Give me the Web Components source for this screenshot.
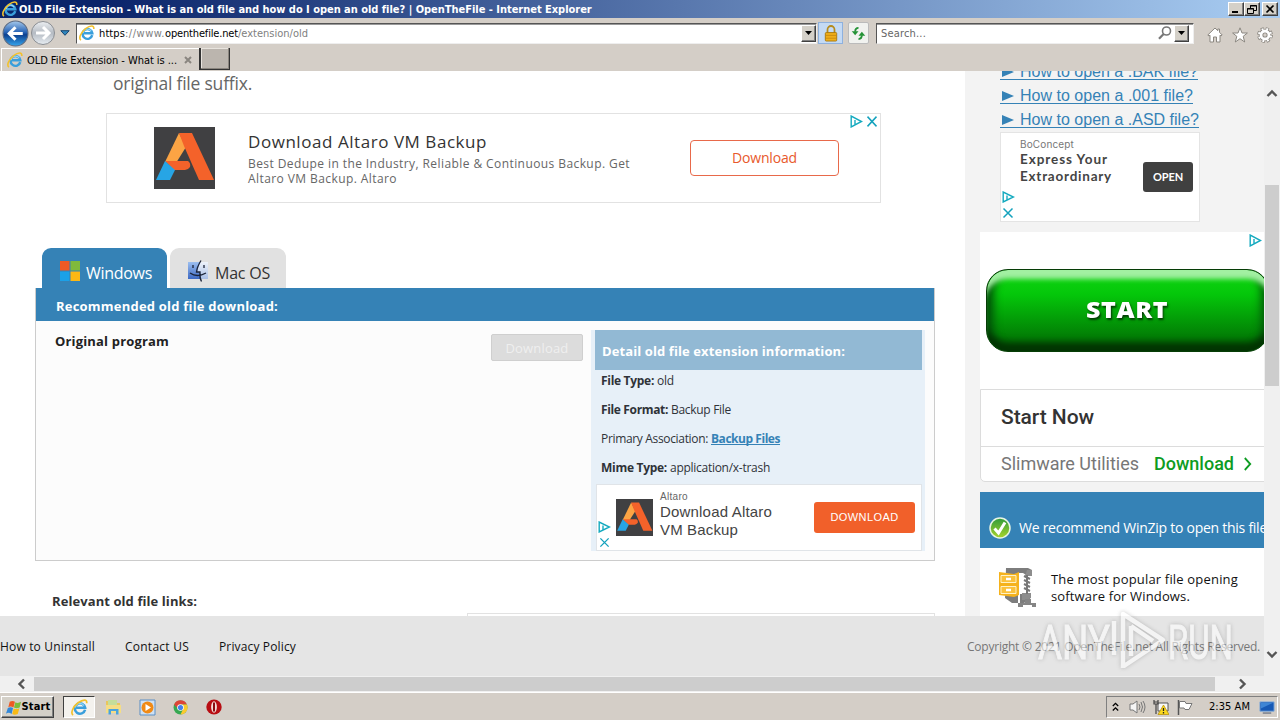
<!DOCTYPE html>
<html lang="en">
<head>
<meta charset="utf-8">
<title>OLD File Extension</title>
<style>
  body {
    margin: 0;
    width: 1280px;
    height: 720px;
    overflow: hidden;
    font-family: "Open Sans", "Noto Sans", sans-serif;
  }
</style>
</head>
<body>
<desktop-screen></desktop-screen>

<script>
const ui = '"DejaVu Sans Condensed", "DejaVu Sans", sans-serif';

const define = (name, html, setup) => {
  const template = document.createElement('template');
  template.innerHTML = html;
  customElements.define(name, class extends HTMLElement {
    constructor() {
      super();
      this.attachShadow({ mode: 'open' });
      this.shadowRoot.appendChild(template.content.cloneNode(true));
    }
    connectedCallback() {
      if (setup) setup(this, this.shadowRoot);
    }
  });
};

// one line of text, spaced out to a given width
define('fit-text', `
  <style>
    :host { display: inline-block; white-space: nowrap; flex: none; }
  </style>
  <span><slot></slot></span>
`, (el, root) => {
  const want = parseFloat(el.getAttribute('w'));
  const len = el.textContent.length;
  const has = root.querySelector('span').getBoundingClientRect().width;
  if (!want || !has || len < 2) return;
  el.style.letterSpacing = (want - has) / len + 'px';
  el.style.width = want + 'px';
});

const icons = {
  ie: ['0 0 18 18', `
    <path d="M14.9 11.4A5.500 5.500 0 1 1 15 9.300H5.500" fill="none" stroke="#3a9fdc" stroke-width="2.700"/>
    <path d="M4.600 9A5 5 0 0 1 13.800 7" fill="none" stroke="#8fd6f7" stroke-width="1.200"/>
    <path d="M2.300 17C-.6 15.500 1.500 8.500 7.500 4C12.500 .4 17.300 -.3 16.600 4.500" fill="none" stroke="#f2c12e" stroke-width="1.800"/>`],
  back: ['0 0 26 26', `
    <defs><linearGradient id="b" x2="0" y2="1"><stop stop-color="#a5c9ec"/><stop offset=".45" stop-color="#2763b5"/><stop offset=".55" stop-color="#0d408f"/><stop offset="1" stop-color="#35a6ee"/></linearGradient></defs>
    <circle cx="13" cy="13" r="12" fill="url(#b)" stroke="#5c6b83"/>
    <path d="M20 13H8M13 7L7 13L13 19" fill="none" stroke="#fff" stroke-width="3"/>`],
  forward: ['0 0 26 26', `
    <defs><linearGradient id="f" x2="0" y2="1"><stop stop-color="#eceff2"/><stop offset=".5" stop-color="#b5bbc3"/><stop offset="1" stop-color="#e7edf2"/></linearGradient></defs>
    <circle cx="13" cy="13" r="11.500" fill="url(#f)" stroke="#8b8e93"/>
    <path d="M6 13H18M13 7L19 13L13 19" fill="none" stroke="#fff" stroke-width="3"/>`],
  drop: ['0 0 10 6', `<path d="M.8 .7H9.200L5 5.300Z" fill="#2f86bd" stroke="#16446e"/>`],
  caret: ['0 0 7 4', `<path d="M0 0H7L3.500 4Z" fill="#000"/>`],
  lock: ['0 0 16 18', `
    <path d="M4 9V5a4 4 0 0 1 8 0V9" fill="none" stroke="#b58b1d" stroke-width="2"/>
    <rect x="1.500" y="8" width="13" height="9" rx="1" fill="#efae19" stroke="#a9780c"/>
    <path d="M2 11H14M2 14H14" stroke="#c98a10"/>`],
  refresh: ['0 0 16 14', `
    <path d="M8 1Q4.500 1 4.500 5M8 13Q11.500 13 11.500 9" fill="none" stroke="#249336" stroke-width="2"/>
    <path d="M.8 4.500H8L4.400 9ZM8 9.500H15.200L11.600 5Z" fill="#249336"/>`],
  search: ['0 0 14 14', `<circle cx="8.500" cy="5" r="4" fill="none" stroke="#777" stroke-width="1.600"/><path d="M5.600 8L1 12.800" stroke="#777" stroke-width="2.200"/>`],
  home: ['0 0 16 16', `<path d="M8 1L.8 8L2 9L3 8.200V15H6.500V10H9.500V15H13V8.200L14 9L15.200 8L12.500 5.300V2H10.800V3.700Z" fill="#fff" stroke="#8b8780"/>`],
  star: ['0 0 16 16', `<path d="M8 .8L10 6H15.400L11.200 9.300L12.700 15L8 11.700L3.300 15L4.800 9.300L.6 6H6Z" fill="#fff" stroke="#8b8780"/>`],
  gear: ['0 0 16 16', `
    <circle cx="8" cy="8" r="6.300" fill="none" stroke="#8b8780" stroke-width="3.200" stroke-dasharray="3 1.948"/>
    <circle cx="8" cy="8" r="4" fill="none" stroke="#8b8780" stroke-width="4.600"/>
    <circle cx="8" cy="8" r="6" fill="none" stroke="#fff" stroke-width="2.200" stroke-dasharray="1.800 2.912" stroke-dashoffset="-.6"/>
    <circle cx="8" cy="8" r="4" fill="none" stroke="#fff" stroke-width="2.800"/>`],
  altaro: ['0 0 61 62', `
    <path d="M0 0H61V62H0Z" fill="#404042"/>
    <path d="M25 6L32 20L22 36L11 35Z" fill="#fba444"/>
    <path d="M25 6H38L60 53H45L30 19Z" fill="#f4622a"/>
    <path d="M11 34H34Q37 36 36 40Q34 43 31 43H20Z" fill="#f4622a"/>
    <path d="M11 34L21 43L16 53H2Z" fill="#27a5e5"/>`],
  adchoices: ['0 0 13 12', `<path d="M1.200 1V11L11.500 6ZM5 4.500V8.500" fill="none" stroke="#14aabf" stroke-width="1.400"/>`],
  cross: ['0 0 12 12', `<path d="M1.500 1.500L10.500 10.500M10.500 1.500L1.500 10.500" stroke="#14a2bd" stroke-width="1.500"/>`],
  windows: ['0 0 20 20', `<path d="M0 0H9.500V9.500H0Z" fill="#ef5a24"/><path d="M10.500 0H20V9.500H10.500Z" fill="#80b93c"/><path d="M0 10.500H9.500V20H0Z" fill="#1ba1e8"/><path d="M10.500 10.500H20V20H10.500Z" fill="#fcb813"/>`],
  finder: ['0 0 22 22', `
    <defs><linearGradient id="m" x2="0" y2="1"><stop stop-color="#9dbff0"/><stop offset="1" stop-color="#3c69c4"/></linearGradient>
    <linearGradient id="n" x2="0" y2="1"><stop stop-color="#eef3fb"/><stop offset="1" stop-color="#a9bfe6"/></linearGradient></defs>
    <path d="M1 2H21V19H1Z" fill="url(#m)"/><path d="M13 2H21V19H14L13 12H10Z" fill="url(#n)"/>
    <path d="M6 5V8M17 5V8M14 .5Q10 7 9.500 12H13Q12.500 18 14.500 21.500M3 13Q10 18 19 13" fill="none" stroke="#1b2338" stroke-width="1.300"/>`],
  check: ['0 0 22 22', `
    <defs><linearGradient id="c" x2="0" y2="1"><stop stop-color="#2f9a3b"/><stop offset="1" stop-color="#a9d52b"/></linearGradient></defs>
    <circle cx="11" cy="11" r="10" fill="url(#c)" stroke="#e8f5e4" stroke-width="1.500"/>
    <path d="M5.500 11.500L9.500 16L16 5.500" fill="none" stroke="#fff" stroke-width="3"/>`],
  chevron: ['0 0 10 14', `<path d="M2 1L8 7L2 13" fill="none" stroke="#0d9c22" stroke-width="2"/>`],
  winzip: ['0 0 40 40', `
    <path d="M8 0H30L34 2V7H28L25 5H20V35H26L32 31V26H22V35H14L7 30Z" fill="#7d7d7d"/>
    <path d="M29 2H34V8H27ZM24 25H33V30L29 32H24Z" fill="#8d8d8d"/>
    <path d="M26 8L32 11M26 12L32 15M26 16L32 19M26 20L32 23M29 7V26" stroke="#777" stroke-width="2"/>
    <path d="M1 4L16 6L21 4V27L16 29L1 27Z" fill="#f5b21c"/>
    <path d="M3 7.500H18V14.500H3ZM3 18.500H18V25.500H3Z" fill="#fbc13a" stroke="#fff1c4"/>
    <path d="M8 11H13M8 22H13" stroke="#fff" stroke-width="2.500"/>
    <path d="M27 31H33V35H38V39H34V37H25V39H20V35H27Z" fill="#858585"/>`],
  flag: ['0 0 18 18', `
    <path d="M5 3Q8 1 10.500 3L9 9Q6 7 3.500 8.700Z" fill="#ed5a24"/><path d="M11 3.500Q13.500 5 17 3L15.500 9Q12 10.500 9.500 9Z" fill="#7bbd3a"/>
    <path d="M3 9.500Q6 8 8.500 9.500L7 16Q4 13.500 1 15.500Z" fill="#3388d8"/><path d="M9.200 10Q12 11.500 15.200 9.800L13.500 16Q10 17.500 7.700 16Z" fill="#f9ba16"/>`],
  folder: ['0 0 17 16', `
    <path d="M1 2H7L8 4H15V14H1Z" fill="#e9c65c"/><path d="M3 1H12V6H3Z" fill="#c5dd9a"/>
    <path d="M1 6H16V14H1Z" fill="#f5dd85"/><path d="M3.500 15.500V10H13.500V15.500H11V12H6V15.500Z" fill="#4aa3dd"/>`],
  player: ['0 0 17 17', `
    <path d="M1 1H16V16H1Z" fill="#cfe1f3" stroke="#5a8fc5"/>
    <circle cx="8.500" cy="8.500" r="6" fill="#f08a16"/><path d="M6.500 5V12L12 8.500Z" fill="#fff"/>`],
  chrome: ['0 0 14 14', `
    <circle cx="7" cy="7" r="6.500" fill="#36a852"/><path d="M1 4.200A6.500 6.500 0 0 1 13 4.200H7L4.500 8Z" fill="#dd4437"/>
    <path d="M13 4.200A6.500 6.500 0 0 1 7 13.500L9.500 8.500L8.500 4.200Z" fill="#fbca2d"/>
    <circle cx="7" cy="7" r="3.100" fill="#fff"/><circle cx="7" cy="7" r="2.400" fill="#4580ea"/>`],
  opera: ['0 0 16 16', `<ellipse cx="8" cy="8" rx="7.700" ry="7.500" fill="#b80d12"/><ellipse cx="8" cy="8" rx="2.900" ry="5.700" fill="#f4ded9"/><path d="M8 3.500V12.500" stroke="#8c0b0f" stroke-width="2"/>`],
  more: ['0 0 7 10', `<path d="M.8 4L3.500 1.300L6.200 4M.8 8.500L3.500 5.800L6.200 8.500" fill="none" stroke="#000" stroke-width="1.300"/>`],
  sound: ['0 0 17 14', `<path d="M1 4H4L8 1V13L4 10H1Z" fill="#f5f5f5" stroke="#777"/><path d="M10 4Q12 7 10 10M12 2Q15 7 12 12M14 1Q18 7 14 13" fill="none" stroke="#777"/>`],
  network: ['0 0 16 16', `
    <path d="M5 4H15V12H5Z" fill="#f7f7f7" stroke="#555"/><path d="M1 1V5H5V1M3 5V15M1 3H5" fill="none" stroke="#444" stroke-width="1.200"/>
    <path d="M10.500 6L16 15.500H5Z" fill="#fbd91d" stroke="#b58b00" stroke-width=".7"/><path d="M10.500 9V12M10.500 13V14.500" stroke="#222" stroke-width="1.300"/>`],
  action: ['0 0 16 15', `<path d="M1.500 0V15" stroke="#555" stroke-width="1.500"/><path d="M2.500 1.500H8L9 3.500H15L12 9.500H8L7 8H2.500Z" fill="#fff" stroke="#777"/>`],
  monitor: ['0 0 17 14', `<path d="M1 1H16V11H1Z" fill="#1759b5" stroke="#7fa9d8"/><path d="M2 2H15L2 8Z" fill="#3e85d5"/><path d="M4 13H13" stroke="#8b8f98" stroke-width="2"/>`],
  up: ['0 0 12 8', `<path d="M1.500 7L6 2.500L10.500 7" fill="none" stroke="#555" stroke-width="2.400"/>`],
  down: ['0 0 12 8', `<path d="M1.500 1L6 5.500L10.500 1" fill="none" stroke="#555" stroke-width="2.400"/>`],
  left: ['0 0 8 12', `<path d="M7 1.500L2.500 6L7 10.500" fill="none" stroke="#555" stroke-width="2.400"/>`],
  right: ['0 0 8 12', `<path d="M1 1.500L5.500 6L1 10.500" fill="none" stroke="#555" stroke-width="2.400"/>`],
};

define('ui-icon', `
  <style>
    :host { display: block; flex: none; }
    svg { display: block; width: 100%; height: 100%; }
  </style>
`, (el, root) => {
  const [box, body] = icons[el.getAttribute('name')];
  el.style.width = el.getAttribute('w') + 'px';
  el.style.height = (el.getAttribute('h') || el.getAttribute('w')) + 'px';
  root.innerHTML += `<svg viewBox="${box}" preserveAspectRatio="none">${body}</svg>`;
});

define('bevel-button', `
  <style>
    :host {
      display: flex; align-items: center; justify-content: center; box-sizing: border-box; flex: none;
      background: #d4d0c8; border: 1px solid; border-color: #fff #404040 #404040 #fff;
      box-shadow: inset -1px -1px #808080;
    }
  </style>
  <slot></slot>
`);

define('title-bar', `
  <style>
    :host {
      display: flex; align-items: center; height: 18px; box-sizing: border-box; padding: 0 2px 0 2px;
      background: linear-gradient(90deg, #0a246a, #0a246a 8%, #a6caf0 98%);
      color: #fff; font: bold 11px/18px ${ui};
    }
    fit-text { margin-left: 1px; padding-top: 1px; }
    .controls { display: flex; margin-left: auto; }
    bevel-button { width: 16px; height: 14px; }
    bevel-button:last-child { margin-left: 2px; }
    svg { width: 12px; height: 10px; }
    path { fill: none; stroke: #000; }
  </style>
  <ui-icon name="ie" w="16"></ui-icon>
  <fit-text w="572">OLD File Extension - What is an old file and how do I open an old file? | OpenTheFile - Internet Explorer</fit-text>
  <div class="controls">
    <bevel-button><svg><path d="M2 8H8" stroke-width="2"/></svg></bevel-button>
    <bevel-button><svg><path d="M4.500 4V1.500H10.500V6.500H8M4 2H11M1.500 4.500H7.500V9.500H1.500ZM1 5H8"/></svg></bevel-button>
    <bevel-button><svg><path d="M2.500 1.500L9.500 8.500M9.500 1.500L2.500 8.500" stroke-width="1.700"/></svg></bevel-button>
  </div>
`);

define('nav-bar', `
  <style>
    :host { display: flex; align-items: center; height: 29px; padding: 1px 7px 0 2px; box-sizing: border-box; font: 11px/18px ${ui}; }
    .field {
      display: flex; align-items: center; box-sizing: border-box; height: 21px; background: #fff;
      border: 1px solid; border-color: #555 #eee #eee #555; box-shadow: inset 0 1px #999;
    }
    .field fit-text { padding-top: 2px; }
    .address { width: 741px; margin-left: 6px; padding-left: 2px; }
    .search { width: 318px; margin-left: 7px; padding: 0 4px 0 4px; color: #666; }
    .url { margin-left: 4px; display: flex; color: #808080; }
    b { font-weight: normal; color: #000; }
    bevel-button { width: 15px; height: 17px; margin-left: auto; }
    .box { width: 23px; height: 20px; display: grid; place-items: center; border: 1px solid #8eb1de; background: #c4daf4; margin-left: 0; }
    .reload { background: #f1f2ef; border-color: #bbb; width: 19px; margin-left: 5px; border-radius: 2px; }
    .tools { display: flex; gap: 9px; margin-left: auto; padding-top: 3px; }
    .search bevel-button { margin-left: 2px; }
  </style>
  <ui-icon name="back" w="27"></ui-icon>
  <ui-icon name="forward" w="26" style="margin-left:1px"></ui-icon>
  <ui-icon name="drop" w="10" h="6" style="margin-left:4px"></ui-icon>
  <div class="field address">
    <ui-icon name="ie" w="16"></ui-icon>
    <div class="url"><b><fit-text w="26">https</fit-text></b><fit-text w="40">://www.</fit-text><b><fit-text w="73">openthefile.net</fit-text></b><fit-text w="70">/extension/old</fit-text></div>
    <bevel-button><ui-icon name="caret" w="7" h="4"></ui-icon></bevel-button>
  </div>
  <div class="box" style="margin-left:1px"><ui-icon name="lock" w="14" h="17"></ui-icon></div>
  <div class="box reload"><ui-icon name="refresh" w="15" h="13"></ui-icon></div>
  <div class="field search">
    <fit-text w="45">Search...</fit-text>
    <ui-icon name="search" w="14" style="margin-left:auto"></ui-icon>
    <bevel-button><ui-icon name="caret" w="7" h="4"></ui-icon></bevel-button>
  </div>
  <div class="tools">
    <ui-icon name="home" w="16"></ui-icon>
    <ui-icon name="star" w="16"></ui-icon>
    <ui-icon name="gear" w="16"></ui-icon>
  </div>
`);

define('tab-strip', `
  <style>
    :host { display: flex; height: 24px; box-sizing: border-box; padding: 1px 0 0 1px; font: 11px/23px ${ui}; }
    .tab { display: flex; align-items: center; width: 198px; box-sizing: border-box; padding-left: 5px; border-top: 1px solid #fff; border-left: 1px solid #fff; }
    .tab fit-text { margin-left: 4px; }
    .close { margin-left: 7px; width: 8px; height: 8px; }
    .close path { stroke: #8a8680; stroke-width: 2; }
    .new { width: 31px; height: 22px; box-sizing: border-box; background: #bbb5ae; border: solid #333; border-width: 0 1px 1px 2px; box-shadow: inset -1px -1px #8a857e, inset 1px 1px #e8e4de; }
  </style>
  <div class="tab">
    <ui-icon name="ie" w="16"></ui-icon>
    <fit-text w="150">OLD File Extension - What is ...</fit-text>
    <svg class="close"><path d="M1 1L7 7M7 1L1 7"/></svg>
  </div>
  <div class="new"></div>
`);

define('wide-ad', `
  <style>
    :host { display: flex; box-sizing: border-box; width: 775px; height: 90px; margin: 0 0 0 106px; border: 1px solid #e2e2e2; padding: 13px 2px 0 47px; }
    .copy { margin: 3px 0 0 33px; width: 442px; letter-spacing: 0; }
    h3 { margin: 0; font: 17px/24px "Open Sans", sans-serif; color: #333; }
    p { margin: 2px 0 0; font-size: 12px; line-height: 15px; color: #666; }
    .copy fit-text { display: block; }
    .button { box-sizing: border-box; width: 149px; height: 36px; margin-top: 13px; border: 1px solid #e8694a; border-radius: 4px; text-align: center; font-size: 14px; line-height: 34px; color: #e8592c; }
    .marks { display: flex; gap: 3px; margin: -12px 0 0 auto; }
  </style>
  <ui-icon name="altaro" w="61" h="62"></ui-icon>
  <div class="copy">
    <h3><fit-text w="239">Download Altaro VM Backup</fit-text></h3>
    <p><fit-text w="382">Best Dedupe in the Industry, Reliable &amp; Continuous Backup. Get</fit-text><fit-text w="149">Altaro VM Backup. Altaro</fit-text></p>
  </div>
  <div class="button"><fit-text w="65">Download</fit-text></div>
  <div class="marks"><ui-icon name="adchoices" w="13" h="13"></ui-icon><ui-icon name="cross" w="12" h="13"></ui-icon></div>
`);

define('os-tab', `
  <style>
    :host {
      display: flex; align-items: center; box-sizing: border-box; height: 40px; padding: 6px 0 0 17px;
      border-radius: 9px 9px 0 0; background: #e1e1e1; color: #333; font-size: 16px; line-height: 34px;
    }
    :host([active]) { background: #3582b6; color: #fff; padding-left: 18px; }
    ::slotted(fit-text) { margin-left: 6px; margin-top: 3px; }
  </style>
  <slot></slot>
`);

define('detail-card', `
  <style>
    :host { display: block; box-sizing: border-box; width: 334px; height: 221px; padding: 0 3px 0 4px; background: #e7f0f8; font-size: 12px; color: #2f3338; }
    h4 { margin: 0; height: 40px; padding: 2px 0 0 7px; box-sizing: border-box; font: bold 13px/39px "Open Sans", sans-serif; color: #fff; background: #92b9d4; }
    .row { display: flex; gap: 3px; height: 29px; line-height: 22px; padding-left: 6px; }
    a { color: #3582b6; font-weight: bold; }
    a fit-text { height: 16px; line-height: 22px; border-bottom: 1px solid #3582b6; }
    .ad { display: flex; box-sizing: border-box; height: 67px; margin: -2px 0 0 1px; border: 1px solid #e0e4e8; background: #fff; font-family: "Liberation Sans", sans-serif; color: #444; }
    .marks { padding: 36px 0 0 1px; width: 18px; display: flex; flex-direction: column; gap: 4px; }
    .copy { margin-left: 7px; padding-top: 6px; width: 154px; font-size: 15px; line-height: 18px; }
    small { display: block; font-size: 10px; line-height: 12px; color: #666; }
    .copy fit-text { display: block; }
    .button { width: 101px; height: 31px; margin-top: 17px; border-radius: 3px; background: #f1602a; color: #fff; text-align: center; font: 11px/31px "Liberation Sans", sans-serif; }
  </style>
  <h4><fit-text w="243">Detail old file extension information:</fit-text></h4>
  <div class="row"><b><fit-text w="53">File Type:</fit-text></b><fit-text w="17">old</fit-text></div>
  <div class="row"><b><fit-text w="67">File Format:</fit-text></b><fit-text w="60">Backup File</fit-text></div>
  <div class="row"><fit-text w="107">Primary Association:</fit-text><a><fit-text w="69">Backup Files</fit-text></a></div>
  <div class="row"><b><fit-text w="66">Mime Type:</fit-text></b><fit-text w="100">application/x-trash</fit-text></div>
  <div class="ad">
    <div class="marks"><ui-icon name="adchoices" w="13" h="12"></ui-icon><ui-icon name="cross" w="11" style="margin-left:1px"></ui-icon></div>
    <ui-icon name="altaro" w="37" style="margin-top:14px"></ui-icon>
    <div class="copy"><small><fit-text w="28">Altaro</fit-text></small><fit-text w="112">Download Altaro</fit-text><fit-text w="78">VM Backup</fit-text></div>
    <div class="button"><fit-text w="68">DOWNLOAD</fit-text></div>
  </div>
`);

define('main-column', `
  <style>
    :host { display: block; width: 965px; flex: none; background: #fff; }
    .intro { height: 42px; padding-left: 113px; font-size: 17.500px; line-height: 24px; color: #666; }
    .tabs { display: flex; gap: 3px; padding: 45px 0 0 42px; }
    .panel { margin-left: 35px; width: 900px; height: 273px; box-sizing: border-box; border: 1px solid #ccc; border-top: 0; background: #fcfcfc; }
    h3 { margin: 0; height: 33px; padding-left: 20px; background: #3582b6; color: #fff; font: bold 13px/36px "Open Sans", sans-serif; }
    .body { display: flex; padding: 9px 0 0 19px; }
    .body b { width: 436px; font-size: 13px; line-height: 22px; color: #222; }
    .off { width: 90px; height: 25px; margin: 4px 8px 0 0; border: 1px solid #cfcfcf; border-radius: 2px; background: #dcdcdc; color: #efefef; text-align: center; font-size: 13px; line-height: 27px; }
    .links { display: flex; padding: 29px 0 0 52px; font-size: 13px; line-height: 22px; color: #333; }
    .links i { width: 468px; height: 20px; margin: 23px 0 0 270px; border: 1px solid #e2e2e2; box-sizing: border-box; }
  </style>
  <div class="intro"><fit-text w="139">original file suffix.</fit-text></div>
  <wide-ad></wide-ad>
  <div class="tabs">
    <os-tab active style="width:125px"><ui-icon name="windows" w="20"></ui-icon><fit-text w="66">Windows</fit-text></os-tab>
    <os-tab style="width:116px"><ui-icon name="finder" w="22"></ui-icon><fit-text w="55">Mac OS</fit-text></os-tab>
  </div>
  <div class="panel">
    <h3><fit-text w="222">Recommended old file download:</fit-text></h3>
    <div class="body">
      <b><fit-text w="114">Original program</fit-text></b>
      <div class="off"><fit-text w="63">Download</fit-text></div>
      <detail-card></detail-card>
    </div>
  </div>
  <div class="links"><b><fit-text w="145">Relevant old file links:</fit-text></b><i></i></div>
`);

define('start-button', `
  <style>
    :host {
      display: grid; place-items: center; box-sizing: border-box; width: 283px; height: 83px; padding-bottom: 3px;
      border: 1px solid #063d06; border-radius: 22px;
      background: linear-gradient(#0cd00f 12%, #04c70a 30%, #027a05 85%);
      box-shadow: inset 0 12px 5px -3px #a2f0a2, inset 0 -11px 6px -2px #023502, inset 10px 0 8px -3px #03580a, inset -10px 0 8px -3px #03580a;
      color: #fff; font: 800 22px/30px "Open Sans", sans-serif; text-shadow: 1px 2px 2px #043b04;
    }
    /* widens the letters rather than the gaps between them */
    span { display: inline-block; transform: scaleX(1.14); }
  </style>
  <span><slot></slot></span>
`, (el, root) => {
  const span = root.querySelector('span');
  const want = parseFloat(el.getAttribute('w'));
  span.style.transform = 'none';
  span.style.letterSpacing = '.5px';
  span.style.transform = `scaleX(${want / span.getBoundingClientRect().width})`;
});

define('side-column', `
  <style>
    :host { display: block; width: 299px; flex: none; overflow: hidden; background: #f3f3f3; }
    .links { padding-left: 35px; margin-top: -11px; font: 16px/24px "Liberation Sans", sans-serif; color: #3582b6; }
    .links div { height: 24px; display: flex; }
    .links span { height: 19px; line-height: 24px; border-bottom: 1px solid #3582b6; white-space: nowrap; display: flex; }
    .links i { width: 12px; height: 10px; margin: 7px 6px 0 2px; background: #3582b6; clip-path: polygon(0 0, 100% 50%, 0 100%); }
    .small { box-sizing: border-box; width: 200px; height: 90px; margin-left: 35px; display: flex; background: #fff; border: 1px solid #e4e4e4; }
    .marks { padding: 58px 0 0 1px; width: 19px; box-sizing: border-box; display: flex; flex-direction: column; gap: 4px; }
    .copy { width: 123px; padding-top: 5px; color: #444; font: bold 13.500px/17px Lato, sans-serif; }
    .copy fit-text { display: block; }
    .copy small { display: block; font: 10px/13px Inter, sans-serif; color: #777; }
    .open { width: 50px; height: 30px; margin-top: 29px; border-radius: 3px; background: #404040; color: #fff; text-align: center; font: bold 11px/30px Lato, sans-serif; }
    .banner { height: 157px; margin: 10px 0 0 15px; background: #fff; padding-left: 6px; position: relative; box-sizing: border-box; padding-top: 37px; }
    .banner ui-icon { position: absolute; right: 2px; top: 2px; }
    .card { margin-left: 15px; width: 300px; height: 93px; box-sizing: border-box; border: 1px solid #dcdcdc; border-radius: 0 0 5px 5px; background: #fff; font-family: Roboto, sans-serif; }
    .card h3 { margin: 0; height: 56px; padding-left: 20px; font: 500 21px/55px Roboto, sans-serif; color: #333; border-bottom: 1px solid #dcdcdc; }
    .card div { display: flex; align-items: center; padding-left: 20px; font-size: 18px; line-height: 34px; color: #777; }
    .card b { margin: 0 9px 0 15px; font-weight: 500; color: #0d9c22; display: flex; }
    .zip { height: 56px; margin: 10px 0 0 15px; padding: 16px 0 0 9px; box-sizing: border-box; display: flex; align-items: center; background: #3582b6; color: #fff; font-size: 14px; }
    .zip fit-text { margin: -1px 0 0 8px; }
    .about { height: 130px; margin-left: 15px; padding: 20px 0 0 18px; display: flex; background: #fff; color: #111; font-size: 13px; line-height: 17px; }
    .about div { margin: 3px 0 0 13px; }
    .about fit-text { display: block; }
  </style>
  <div class="links">
    <div><span><i></i><fit-text w="178">How to open a .BAK file?</fit-text></span></div>
    <div><span><i></i><fit-text w="173">How to open a .001 file?</fit-text></span></div>
    <div><span><i></i><fit-text w="179">How to open a .ASD file?</fit-text></span></div>
  </div>
  <div class="small">
    <div class="marks"><ui-icon name="adchoices" w="13" h="12"></ui-icon><ui-icon name="cross" w="12"></ui-icon></div>
    <div class="copy"><small><fit-text w="54">BoConcept</fit-text></small><fit-text w="88">Express Your</fit-text><fit-text w="92">Extraordinary</fit-text></div>
    <div class="open"><fit-text w="30">OPEN</fit-text></div>
  </div>
  <div class="banner"><ui-icon name="adchoices" w="13" h="13"></ui-icon><start-button w="82">START</start-button></div>
  <div class="card">
    <h3><fit-text w="93">Start Now</fit-text></h3>
    <div><fit-text w="138">Slimware Utilities</fit-text><b><fit-text w="80">Download</fit-text></b><ui-icon name="chevron" w="9" h="14"></ui-icon></div>
  </div>
  <div class="zip"><ui-icon name="check" w="22"></ui-icon><fit-text w="248">We recommend WinZip to open this file</fit-text></div>
  <div class="about"><ui-icon name="winzip" w="40"></ui-icon><div><fit-text w="187">The most popular file opening</fit-text><fit-text w="139">software for Windows.</fit-text></div></div>
`);

define('page-footer', `
  <style>
    :host { display: flex; height: 60px; box-sizing: border-box; padding-right: 4px; background: #e5e5e5; font-size: 12px; line-height: 61px; color: #111; flex: none; }
    fit-text + fit-text { margin-left: 30px; }
    fit-text:last-of-type { margin-left: auto; color: #777; }
  </style>
  <fit-text w="95">How to Uninstall</fit-text>
  <fit-text w="64">Contact US</fit-text>
  <fit-text w="77">Privacy Policy</fit-text>
  <fit-text w="293">Copyright © 2021 OpenTheFile.net All Rights Reserved.</fit-text>
`);

define('water-mark', `
  <style>
    :host { position: absolute; left: 1036px; top: 608px; width: 204px; height: 68px; }
    svg { display: block; overflow: visible; filter: drop-shadow(0 0 2px rgba(100,100,100,.6)); opacity: .58; }
    text { font: 49px Roboto, sans-serif; fill: #fff; stroke: #fff; stroke-width: 1; }
    path { fill: none; stroke: #fff; stroke-width: 4.500; stroke-linejoin: round; }
  </style>
  <svg width="204" height="68">
    <text x="2" y="51" textLength="72" lengthAdjust="spacingAndGlyphs">ANY</text>
    <path d="M78 13L78 47M87 60V6L127 32L88 58M95 18V48M95 18L117 33"/>
    <text x="132" y="51" textLength="65" lengthAdjust="spacingAndGlyphs">RUN</text>
  </svg>
`);

define('task-bar', `
  <style>
    :host { display: flex; align-items: center; height: 28px; box-sizing: border-box; padding: 1px 2px 0 1px; border-top: 1px solid #fff; background: #d4cec7; font: 11px/22px ${ui}; }
    .start { width: 53px; height: 22px; font-weight: bold; }
    .current { display: grid; place-items: center; width: 32px; height: 22px; box-sizing: border-box; margin-left: 9px; background: #f4f2ee; border: 1px solid; border-color: #404040 #fff #fff #404040; }
    .quick { display: flex; align-items: center; gap: 17px; margin-left: 10px; }
    .tray { display: flex; align-items: center; box-sizing: border-box; width: 172px; height: 22px; margin-left: auto; padding: 0 2px 0 5px; border: 1px solid; border-color: #808080 #fff #fff #808080; }
  </style>
  <bevel-button class="start"><ui-icon name="flag" w="17"></ui-icon><fit-text w="29">Start</fit-text></bevel-button>
  <div class="current"><ui-icon name="ie" w="17"></ui-icon></div>
  <div class="quick">
    <ui-icon name="folder" w="17" h="16"></ui-icon>
    <ui-icon name="player" w="17"></ui-icon>
    <ui-icon name="chrome" w="15"></ui-icon>
    <ui-icon name="opera" w="16" style="margin-left:1px"></ui-icon>
  </div>
  <div class="tray">
    <ui-icon name="more" w="7" h="10"></ui-icon>
    <ui-icon name="sound" w="17" h="14" style="margin-left:10px"></ui-icon>
    <ui-icon name="network" w="16" style="margin-left:7px"></ui-icon>
    <ui-icon name="action" w="16" h="15" style="margin-left:8px"></ui-icon>
    <fit-text w="41" style="margin-left:16px">2:35 AM</fit-text>
    <ui-icon name="monitor" w="16" h="13" style="margin-left:auto"></ui-icon>
  </div>
`);

define('desktop-screen', `
  <style>
    :host { display: flex; flex-direction: column; position: relative; width: 1280px; height: 720px; overflow: hidden; background: #d4cec7; }
    .view { display: flex; height: 605px; }
    .page { width: 1264px; display: flex; flex-direction: column; }
    .columns { display: flex; height: 545px; overflow: hidden; }
    .vbar { width: 16px; box-sizing: border-box; padding: 18px 1px 17px; display: flex; flex-direction: column; align-items: center; background: #f0f0f0; }
    .vbar i { width: 14px; height: 201px; margin: 88px 0 auto; background: #cdcdcd; }
    .hbar { height: 16px; display: flex; align-items: center; background: #f0f0f0; }
    .hbar i { width: 1181px; height: 14px; margin: 0 24px 0 9px; background: #cdcdcd; }
  </style>
  <title-bar></title-bar>
  <nav-bar></nav-bar>
  <tab-strip></tab-strip>
  <div class="view">
    <div class="page">
      <div class="columns"><main-column></main-column><side-column></side-column></div>
      <page-footer></page-footer>
    </div>
    <div class="vbar"><ui-icon name="up" w="12" h="8"></ui-icon><i></i><ui-icon name="down" w="12" h="8"></ui-icon></div>
  </div>
  <div class="hbar"><ui-icon name="left" w="8" h="12" style="margin-left:17px"></ui-icon><i></i><ui-icon name="right" w="8" h="12"></ui-icon></div>
  <task-bar></task-bar>
  <water-mark></water-mark>
`);
</script>
</body>
</html>
